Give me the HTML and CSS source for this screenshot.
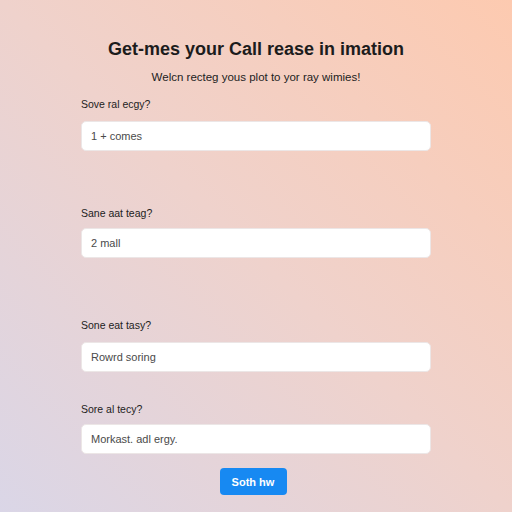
FILE: index.html
```html
<!DOCTYPE html>
<html lang="en">
<head>
  <meta charset="UTF-8">
  <meta name="viewport" content="width=device-width, initial-scale=1.0">
  <title>Call release information</title>
  <link rel="stylesheet" href="styles.css">
</head>
<body>
  <main class="form-wrap">
    <h1>Get-mes your Call rease in imation</h1>
    <p class="lead">Welcn recteg yous plot to yor ray wimies!</p>

    <form class="form">
      <div class="field">
        <label for="q1">Sove ral ecgy?</label>
        <input id="q1" type="text" value="1 + comes">
      </div>

      <div class="field field-gap-lg">
        <label for="q2">Sane aat teag?</label>
        <input id="q2" type="text" value="2 mall">
      </div>

      <div class="field field-gap-xl">
        <label for="q3">Sone eat tasy?</label>
        <input id="q3" type="text" value="Rowrd soring">
      </div>

      <div class="field field-gap-sm">
        <label for="q4">Sore al tecy?</label>
        <input id="q4" type="text" value="Morkast. adl ergy.">
      </div>

      <div class="actions">
        <button type="submit">Soth hw</button>
      </div>
    </form>
  </main>
</body>
</html>
```

FILE: styles.css
```css
html, body {
  margin: 0;
  height: 100%;
}
body {
  font-family: "Liberation Sans", Arial, sans-serif;
  color: #1c1c1c;
  background: linear-gradient(45deg, #dad6e7 0%, #efd2cc 50%, #fdcab0 100%);
  min-height: 512px;
}
.form-wrap {
  width: 350px;
  margin: 0 auto;
  padding-top: 38px;
}
h1 {
  font-size: 18px;
  font-weight: 600;
  text-align: center;
  margin: 0;
  line-height: 23px;
}
.lead {
  font-size: 11.5px;
  text-align: center;
  margin: 9px 0 0;
  color: #222;
  line-height: 14px;
}
.form {
  margin-top: 14px;
}
.field {
  display: flex;
  flex-direction: column;
  gap: 10px;
}
.field label {
  font-size: 10.5px;
  line-height: 13px;
  color: #222;
}
.field input {
  height: 30px;
  box-sizing: border-box;
  border: 1px solid #ece6e6;
  border-radius: 5px;
  background: #fff;
  padding: 0 9px;
  font-family: inherit;
  font-size: 11px;
  color: #4a4a4a;
  outline: none;
}
.field-gap-lg {
  margin-top: 56px;
}
.field-gap-lg label,
.field-gap-sm label {
  margin-bottom: -2px;
}
.field-gap-xl {
  margin-top: 61px;
}
.field-gap-sm {
  margin-top: 31px;
}
.actions {
  display: flex;
  justify-content: center;
  margin-top: 14px;
  padding-right: 6px;
}
.actions button {
  background: #1789f2;
  color: #fff;
  border: none;
  border-radius: 4px;
  width: 67px;
  height: 27px;
  font-family: inherit;
  font-size: 11px;
  font-weight: 700;
}
```
